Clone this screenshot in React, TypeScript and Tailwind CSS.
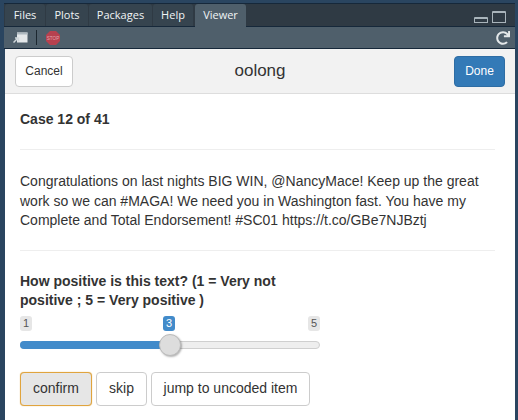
import React from 'react';
import { FaRedo } from 'react-icons/fa';

const tabs = [
  { label: 'Files', width: 'w-[40px]' },
  { label: 'Plots', width: 'w-[42px]' },
  { label: 'Packages', width: 'w-[63px]' },
  { label: 'Help', width: 'w-[40px]' },
];

export default function App() {
  return (
    <div className="h-[420px] w-[518px] overflow-hidden bg-[#2a4560] pt-[3px] pl-[4px] pr-[3px] font-['Liberation_Sans',Arial,sans-serif] text-[14px] text-[#333333]">
      <div className="flex h-[24px] items-end gap-[1px] border-t border-b border-[#16283a] bg-[#2f3a44] pl-[1px]">
        {tabs.map(t => (
          <div key={t.label} className={`flex h-[22px] items-center justify-center rounded-t-[3px] bg-[#36444f] font-['Open_Sans',sans-serif] text-[11px] text-[#f0f4f6] ${t.width}`}>
            {t.label}
          </div>
        ))}
        <div className="-mb-px ml-[1px] flex h-[23px] w-[51px] items-center justify-center rounded-t-[3px] bg-[#4f5f6b] font-['Open_Sans',sans-serif] text-[11px] text-[#f0f4f6]">
          Viewer
        </div>
        <div className="mr-[9px] ml-auto flex items-end gap-[4px] pb-[3px]">
          <div className="h-[6px] w-[14px] rounded-t-[1px] border border-t-[2px] border-[#a9b4bb]" />
          <div className="h-[12px] w-[14px] rounded-t-[1px] border border-t-[2px] border-[#a9b4bb]" />
        </div>
      </div>
      <div className="flex h-[22px] items-center border-b border-[#16283a] bg-[#4f5f6b] pr-[5px] pl-[9px]">
        <svg width="15" height="11" viewBox="0 0 15 11">
          <path d="M4 0.5 H14.5 V10.5 H4 Z" fill="#e4e8ea" />
          <path d="M4 0.5 H14.5 V2.5 H4 Z" fill="#aeb9c0" />
          <path d="M0.5 10.5 L4.5 6.5 M2 6 H5.5 V9.5" stroke="#cfd6da" strokeWidth="1.5" fill="none" />
        </svg>
        <div className="ml-[8px] h-[15px] w-px bg-[#1c2730]" />
        <svg className="ml-[9px]" width="14" height="14" viewBox="0 0 14 14">
          <polygon points="4,0 10,0 14,4 14,10 10,14 4,14 0,10 0,4" fill="#b7414f" />
          <text x="7" y="8.7" textAnchor="middle" fontSize="4.6" fill="#e3a6ae">STOP</text>
        </svg>
        <FaRedo className="ml-auto h-[14px] w-[14px] text-[#e4e8ea]" />
      </div>
      <div className="ml-[1px] h-[371px] bg-white">
        <div className="grid h-[45px] grid-cols-[1fr_auto_1fr] items-center border-b border-[#dddddd] bg-[#f2f2f2] pr-[10px] pl-[10px]">
          <button className="h-[31px] w-[58px] rounded-[4px] border border-[#cccccc] bg-white text-[12px]">Cancel</button>
          <span className="text-[17px]">oolong</span>
          <button className="h-[31px] w-[51px] justify-self-end rounded-[4px] border border-[#2e6da4] bg-[#337ab7] text-[12px] text-white">Done</button>
        </div>
        <div className="pt-[15px] pr-[20px] pl-[15px]">
          <p className="h-[20px] leading-[20px] font-bold">Case 12 of 41</p>
          <div className="mt-[20px] h-px bg-[#eeeeee]" />
          <p className="mt-[22px] leading-[19.6px]">
            Congratulations on last nights BIG WIN, @NancyMace! Keep up the great work so we can #MAGA! We need you in Washington fast. You have my Complete and Total Endorsement! #SC01 https://t.co/GBe7NJBztj
          </p>
          <div className="mt-[19px] h-px bg-[#eeeeee]" />
          <p className="mt-[21px] w-[300px] leading-[19.6px] font-bold">
            How positive is this text? (1 = Very not positive ; 5 = Very positive )
          </p>
          <div className="mt-[5px] w-[300px]">
            <div className="flex justify-between text-[11px] leading-[15px]">
              <span className="w-[12px] rounded-[3px] bg-[#e6e6e6] text-center text-[#555555]">1</span>
              <span className="w-[12px] -translate-x-[1px] rounded-[3px] bg-[#428bca] text-center text-white">3</span>
              <span className="w-[12px] rounded-[3px] bg-[#e6e6e6] text-center text-[#555555]">5</span>
            </div>
            <div className="relative mt-[10px] flex h-[8px] rounded-full border border-[#cfcfcf] bg-[#eeeeee]">
              <div className="-m-px h-[8px] w-[150px] rounded-l-full bg-[#428bca]" />
              <div className="absolute top-[-8px] left-[138px] h-[22px] w-[22px] rounded-full border border-[#bbbbbb] bg-[#dddddd] shadow-[1px_1px_2px_rgba(0,0,0,0.3)]" />
            </div>
          </div>
          <div className="mt-[23px] flex gap-[4px]">
            <button className="h-[34px] w-[72px] rounded-[4px] border border-[#e0a43e] bg-[#e6e6e6] shadow-[0_0_1px_#e0a43e]">confirm</button>
            <button className="h-[34px] w-[51px] rounded-[4px] border border-[#cccccc] bg-white">skip</button>
            <button className="h-[34px] w-[159px] rounded-[4px] border border-[#cccccc] bg-white">jump to uncoded item</button>
          </div>
        </div>
      </div>
    </div>
  );
}
